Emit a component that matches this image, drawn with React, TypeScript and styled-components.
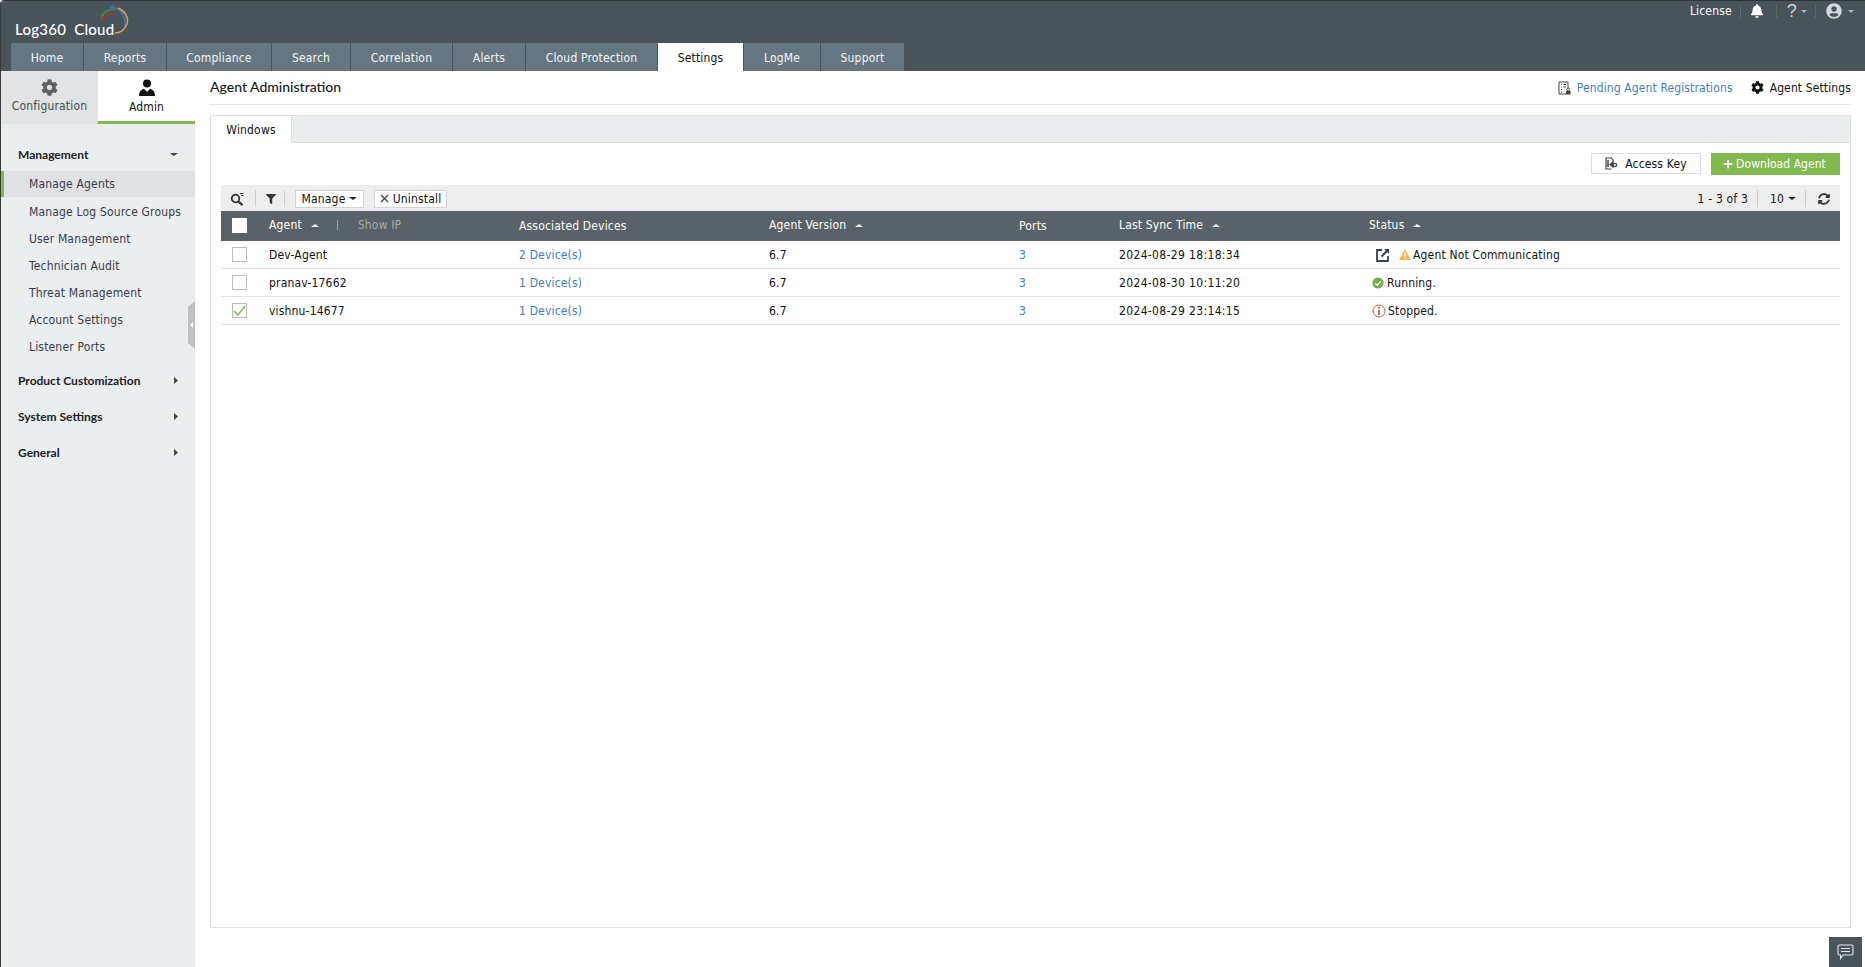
import React from "react";
import styled, { createGlobalStyle } from "styled-components";
import { FaBell, FaCog, FaFilter, FaPlus, FaSyncAlt, FaUserCircle } from "react-icons/fa";

const BODY = `"DejaVu Sans Condensed", "DejaVu Sans", sans-serif`;
const HEAD = `Lato, "Open Sans", sans-serif`;

const Global = createGlobalStyle`
  html, body { margin: 0; padding: 0; height: 100%; background: #fff; overflow: hidden; }
  * { box-sizing: border-box; }
  body { font-family: ${BODY}; font-size: 12px; color: #111; font-stretch: condensed; letter-spacing: .17px; }
`;

const Shell = styled.div`
  width: 1865px; height: 967px; display: flex; flex-direction: column;
  border-top: 1px solid #333; border-left: 1px solid #3a3a3a; border-top-left-radius: 4px; overflow: hidden;
`;
const Header = styled.header`
  height: 70px; flex: none; display: flex; flex-direction: column; background: #49535a;
`;
const TopBar = styled.div`
  height: 42px; flex: none; display: flex; justify-content: space-between; align-items: flex-start; padding: 0 11px 0 14px;
`;
const Logo = styled.div`
  position: relative; width: 120px; height: 42px; color: #fff; font-family: ${HEAD}; font-size: 15px; font-weight: 500;
  word-spacing: 4px; letter-spacing: .25px; padding-top: 18px; line-height: 20px; white-space: nowrap;
`;
const LogoArc = styled.svg`
  position: absolute; left: 84px; top: 5px;
`;
const Utils = styled.div`
  display: flex; align-items: center; height: 20px; color: #fff;
`;
const UtilLink = styled.span`
  font-size: 12px; color: #fff; padding-right: 8px; margin-right: 9px; line-height: 13px; border-right: 1px solid #5d686f;
`;
const UtilIcon = styled.span<{ $pad?: number }>`
  display: flex; align-items: center; gap: 4px; height: 13px; padding-right: ${p => p.$pad ?? 9}px; margin-right: 10px; border-right: 1px solid #5d686f; color: #d9dcde;
  &:last-child { border: 0; margin: 0; padding: 0; gap: 6px; }
`;
const Question = styled.span`
  font-size: 18px; line-height: 13px; color: #d0d4d6; font-family: "Liberation Sans", sans-serif;
`;
const Caret = styled.i<{ $c?: string; $up?: boolean; $s?: number }>`
  display: inline-block; width: 0; height: 0;
  border-left: ${p => p.$s ?? 4}px solid transparent; border-right: ${p => p.$s ?? 4}px solid transparent;
  ${p => (p.$up ? "border-bottom" : "border-top")}: ${p => (p.$s ?? 4) - 0.5}px solid ${p => p.$c ?? "#222"};
`;
const Tabs = styled.nav`
  display: flex; height: 28px; padding-left: 10px; gap: 1px;
`;
const Tab = styled.div<{ $w: number; $active?: boolean }>`
  width: ${p => p.$w}px; display: flex; align-items: center; justify-content: center; font-size: 12px; padding-top: 2px;
  background: ${p => (p.$active ? "#fff" : "#667680")}; color: ${p => (p.$active ? "#111" : "#f4f6f7")};
`;
const Body = styled.div`
  flex: 1; display: flex; min-height: 0;
`;
const Side = styled.aside`
  width: 194px; flex: none; background: #ebeeef; position: relative;
`;
const SideTabs = styled.div`
  display: flex; height: 53px; background: #fff; margin-bottom: 12px;
`;
const SideTab = styled.div<{ $active?: boolean }>`
  flex: none; width: 97px; display: flex; flex-direction: column; align-items: center; padding-top: 8px;
  gap: 3px; font-size: 12px; height: 53px;
  background: ${p => (p.$active ? "#fff" : "#e1e3e5")}; color: ${p => (p.$active ? "#111" : "#444b50")};
  border-bottom: 3px solid ${p => (p.$active ? "#82b94e" : "#e1e3e5")};
`;
const Section = styled.div`
  height: 36px; display: flex; align-items: center; justify-content: space-between; padding: 0 17px 0 17px;
  font-family: ${HEAD}; font-size: 12px; font-weight: 700; color: #1c2026; letter-spacing: 0;
`;
const MenuList = styled.ul`
  list-style: none; margin: -1px 0 2px; padding: 0;
`;
const MenuItem = styled.li<{ $active?: boolean }>`
  height: 27px; display: flex; align-items: center; padding-left: ${p => (p.$active ? 25 : 28)}px; font-size: 12px; color: #3a3a4e;
  ${p => p.$active && "background: #e0e1e3; border-left: 3px solid #82b94e; height: 26px; margin-bottom: 1px;"}
`;
const Handle = styled.div`
  position: absolute; right: 0; top: 230px; width: 7px; height: 48px; background: #bcc2c4;
  clip-path: polygon(0 6px, 100% 0, 100% 100%, 0 calc(100% - 6px)); display: flex; align-items: center; justify-content: center;
`;
const Main = styled.main`
  flex: 1; min-width: 0; display: flex; flex-direction: column; padding: 0 14px 39px 15px; background: #fff; position: relative;
`;
const TitleBar = styled.div`
  height: 34px; flex: none; display: flex; align-items: center; justify-content: space-between; border-bottom: 1px solid #e2e3e4; margin-bottom: 10px; padding-bottom: 3px;
`;
const Title = styled.h1`
  margin: 0; font-family: ${HEAD}; font-size: 14px; font-weight: 500; color: #15191d; letter-spacing: 0;
`;
const TitleLinks = styled.div`
  display: flex; align-items: center; gap: 18px; font-size: 12px; padding-top: 3px;
`;
const LinkItem = styled.span<{ $blue?: boolean }>`
  display: flex; align-items: center; gap: 6px; color: ${p => (p.$blue ? "#3f80bb" : "#111")}; letter-spacing: .12px;
`;
const Panel = styled.section`
  flex: 1; border: 1px solid #dcdedf; display: flex; flex-direction: column; padding: 0 10px;
`;
const PanelTabs = styled.div`
  margin: 0 -10px; height: 27px; flex: none; background: #ebeeef; border-bottom: 1px solid #dcdedf; display: flex;
`;
const PanelTab = styled.div`
  width: 81px; height: 27px; background: #fff; border-right: 1px solid #dcdedf; display: flex; align-items: center; justify-content: center; font-size: 12px;
`;
const Actions = styled.div`
  display: flex; justify-content: flex-end; align-items: flex-start; gap: 10px; height: 22px; margin: 10px 0 10px;
`;
const KeyBtn = styled.div`
  width: 110px; height: 21px; border: 1px solid #dcdedf; display: flex; align-items: center; justify-content: center; gap: 7px; font-size: 12px;
`;
const GreenBtn = styled.div`
  width: 129px; height: 22px; background: #82b94e; color: #fff; display: flex; align-items: center; justify-content: center; gap: 3px; font-size: 12px; letter-spacing: .05px; padding-right: 2px;
`;
const Toolbar = styled.div`
  height: 26px; flex: none; background: #eee; display: flex; align-items: center; padding: 1px 10px 0 9px;
`;
const ToolIcon = styled.span<{ $pad: number }>`
  display: flex; align-items: center; padding-right: ${p => p.$pad}px; margin-right: 10px; height: 17px; border-right: 1px solid #ccc;
`;
const ToolBtn = styled.div<{ $w: number }>`
  width: ${p => p.$w}px; height: 18px; background: #fff; border: 1px solid #d2d4d5; display: flex; align-items: center; justify-content: center; gap: 4px; margin-right: 10px; font-size: 12px;
`;
const Pager = styled.div`
  margin-left: auto; display: flex; align-items: center; font-size: 12px; height: 17px;
`;
const PagerCell = styled.span`
  display: flex; align-items: center; gap: 4px; height: 17px; padding-right: 9px; margin-right: 12px; border-right: 1px solid #ccc;
  &:last-child { border: 0; padding: 0; margin: 0; }
`;
const Grid = `display: grid; grid-template-columns: 48px 250px 250px 250px 100px 250px 1fr; align-items: center;`;
const HeadRow = styled.div`
  ${Grid} height: 30px; flex: none; background: #586268; color: #fff; font-size: 12px;
`;
const HeadCell = styled.div<{ $lift?: boolean }>`
  display: flex; align-items: center; gap: 9px; ${p => p.$lift && "padding-bottom: 2px;"}
`;
const Muted = styled.span`
  color: #a4aaae; margin-left: 11px;
`;
const Sep = styled.span`
  width: 1px; height: 10px; background: #9aa1a5; margin-left: 9px;
`;
const CheckCell = styled.div<{ $lift?: boolean }>`
  padding-left: 11px; display: flex; ${p => p.$lift && "padding-bottom: 2px;"}
`;
const Box = styled.span<{ $white?: boolean }>`
  width: 15px; height: 15px; background: #fff; border: 1px solid ${p => (p.$white ? "#fff" : "#b9bdc0")}; display: flex; align-items: center; justify-content: center;
`;
const Row = styled.div`
  ${Grid} height: 28px; flex: none; border-bottom: 1px solid #e0e2e3; font-size: 12px; color: #111;
`;
const LinkText = styled.span`
  color: #3f80bb;
`;
const TimeText = styled.div`
  letter-spacing: .35px;
`;
const StatusCell = styled.div`
  display: flex; align-items: center; gap: 2px; padding-left: 3px;
`;
const RunningText = styled.span`
  margin-left: 1px;
`;
const ExternalWrap = styled.span`
  display: flex; margin-left: 4px; margin-right: 7px;
`;
const ChatBtn = styled.div`
  position: absolute; right: 3px; bottom: 0; width: 33px; height: 30px; background: #49535a; display: flex; align-items: center; justify-content: center;
`;
const LowerIcon = styled.span`
  display: flex;
`;

const tabs: [string, number, boolean?][] = [
  ["Home", 72], ["Reports", 82], ["Compliance", 104], ["Search", 78], ["Correlation", 101], ["Alerts", 72],
  ["Cloud Protection", 131], ["Settings", 85, true], ["LogMe", 76], ["Support", 83],
];
const menu = ["Manage Log Source Groups", "User Management", "Technician Audit", "Threat Management", "Account Settings", "Listener Ports"];

const AdminIcon = () => (
  <svg width="18" height="18" viewBox="0 0 18 18" fill="#111">
    <circle cx="9" cy="4.6" r="4" />
    <path d="M1 17c0-4 1.5-6.5 5-7.3L9 13l3-3.3c3.5.8 5 3.3 5 7.3z" />
  </svg>
);
const PendingIcon = () => (
  <svg width="13" height="14" viewBox="0 0 13 14" fill="none" stroke="#444" strokeWidth="1">
    <path d="M8 13H1V1h9v6" />
    <path d="M3 3.5h1M5.5 3.5h2.5M3 6h1M5.5 6h2.5M3 8.5h1M3 11h1" />
    <rect x="8" y="10" width="4.5" height="3.5" fill="#444" stroke="none" />
    <circle cx="10.2" cy="8.5" r="1.4" />
  </svg>
);
const SearchIcon = () => (
  <svg width="14" height="14" viewBox="0 0 14 14" fill="none" stroke="#333" strokeWidth="1.8">
    <circle cx="5.5" cy="6.5" r="3.8" />
    <path d="M8.5 9.5l4 3.6" strokeWidth="2.2" />
    <path d="M10 1.5h3.5M11 3.5h2.5" strokeWidth="1" />
  </svg>
);
const KeyIcon = () => (
  <svg width="13" height="13" viewBox="0 0 13 13" fill="none" stroke="#444" strokeWidth="1.2">
    <path d="M6.5 12H1V1h5.5l1.5 2v2" />
    <path d="M3 3v7" strokeWidth="1.5" />
    <path d="M5 7.5l3-2.5v5z" fill="#444" />
    <circle cx="10" cy="8" r="1.6" />
  </svg>
);
const ExternalIcon = () => (
  <svg width="14" height="14" viewBox="0 0 14 14" fill="none" stroke="#3a4247" strokeWidth="1.8">
    <path d="M6 2H1v11h11V8" />
    <path d="M5.5 8.5L11 3" strokeWidth="2" />
    <path d="M8 1h5v5z" fill="#3a4247" stroke="none" />
  </svg>
);
const WarnIcon = () => (
  <svg width="12" height="11" viewBox="0 0 12 11">
    <path d="M6 0l6 11H0z" fill="#f2b84f" />
    <path d="M5.4 3.5h1.2v4H5.4zM5.4 8.3h1.2v1.2H5.4z" fill="#fff" />
  </svg>
);
const OkIcon = () => (
  <svg width="12" height="12" viewBox="0 0 12 12">
    <circle cx="6" cy="6" r="5.6" fill="#72ad4b" />
    <path d="M3.2 6.2l2 2 3.6-3.8" fill="none" stroke="#fff" strokeWidth="1.4" />
  </svg>
);
const StopIcon = () => (
  <svg width="14" height="14" viewBox="0 0 14 14" fill="none">
    <circle cx="7" cy="7" r="6" stroke="#c0623f" strokeWidth="1" />
    <path d="M7 6v5" stroke="#a8512f" strokeWidth="1.6" />
    <circle cx="7" cy="3.8" r="1" fill="#a8512f" />
  </svg>
);
const ChatIcon = () => (
  <svg width="17" height="16" viewBox="0 0 17 16" fill="none" stroke="#e6e9ea" strokeWidth="1.1">
    <path d="M2.5 1h12A1.5 1.5 0 0 1 16 2.5v7a1.5 1.5 0 0 1-1.5 1.5H6l-2.5 3.5V11h-1A1.5 1.5 0 0 1 1 9.5v-7A1.5 1.5 0 0 1 2.5 1z" />
    <path d="M4 4.5h9M4 7.5h9" />
  </svg>
);
const CrossIcon = () => (
  <svg width="9" height="9" viewBox="0 0 9 9" fill="none" stroke="#444" strokeWidth="1.3">
    <path d="M1 1l7 7M8 1L1 8" />
  </svg>
);

const SortHead = ({ label }: { label: string }) => (
  <HeadCell $lift>{label}<Caret $c="#fff" $up /></HeadCell>
);

function RightCaret() {
  return <svg width="4" height="7" viewBox="0 0 4 7"><path d="M0 0l4 3.5L0 7z" fill="#444" /></svg>;
}

const rows = [
  { name: "Dev-Agent", dev: "2 Device(s)", time: "2024-08-29 18:18:34", status: "bad" },
  { name: "pranav-17662", dev: "1 Device(s)", time: "2024-08-30 10:11:20", status: "ok" },
  { name: "vishnu-14677", dev: "1 Device(s)", time: "2024-08-29 23:14:15", status: "stop", checked: true },
];

export default function App() {
  return (
    <>
      <Global />
      <Shell>
        <Header>
          <TopBar>
            <Logo>
              Log360 Cloud
              <LogoArc width="30" height="30" viewBox="0 0 30 30" fill="none">
                <path d="M2 11C5 6 10 3 16 3" stroke="#3d8a55" strokeWidth="2.2" />
                <path d="M2 15C5 10 10 7 17 7" stroke="#a23a2c" strokeWidth="2.2" />
                <path d="M11 1C20 1 28 10 26 21" stroke="#3a6fb5" strokeWidth="2.2" />
                <path d="M19 2C26 5 30 11 28 18C26 23 22 27 16 27" stroke="#e0a43c" strokeWidth="1.5" />
              </LogoArc>
            </Logo>
            <Utils>
              <UtilLink>License</UtilLink>
              <UtilIcon $pad={12}><FaBell size={14} color="#fff" /></UtilIcon>
              <UtilIcon $pad={8}><Question>?</Question><Caret $c="#b0b6ba" $s={3.5} /></UtilIcon>
              <UtilIcon><FaUserCircle size={16} color="#d5d8da" /><Caret $c="#b0b6ba" $s={3.5} /></UtilIcon>
            </Utils>
          </TopBar>
          <Tabs>
            {tabs.map(([t, w, a]) => <Tab key={t} $w={w} $active={a}>{t}</Tab>)}
          </Tabs>
        </Header>
        <Body>
          <Side>
            <SideTabs>
              <SideTab><FaCog size={17} color="#5b6368" />Configuration</SideTab>
              <SideTab $active><AdminIcon />Admin</SideTab>
            </SideTabs>
            <Section>Management<Caret $c="#444" /></Section>
            <MenuList>
              <MenuItem $active>Manage Agents</MenuItem>
              {menu.map(m => <MenuItem key={m}>{m}</MenuItem>)}
            </MenuList>
            <Section>Product Customization<LowerIcon><RightCaret /></LowerIcon></Section>
            <Section>System Settings<LowerIcon><RightCaret /></LowerIcon></Section>
            <Section>General<LowerIcon><RightCaret /></LowerIcon></Section>
            <Handle><svg width="3" height="6" viewBox="0 0 3 6"><path d="M3 0v6L0 3z" fill="#fff" /></svg></Handle>
          </Side>
          <Main>
            <TitleBar>
              <Title>Agent Administration</Title>
              <TitleLinks>
                <LinkItem $blue><PendingIcon />Pending Agent Registrations</LinkItem>
                <LinkItem><FaCog size={13} color="#111" />Agent Settings</LinkItem>
              </TitleLinks>
            </TitleBar>
            <Panel>
              <PanelTabs><PanelTab>Windows</PanelTab></PanelTabs>
              <Actions>
                <KeyBtn><KeyIcon />Access Key</KeyBtn>
                <GreenBtn><FaPlus size={10} />Download Agent</GreenBtn>
              </Actions>
              <Toolbar>
                <ToolIcon $pad={11}><SearchIcon /></ToolIcon>
                <ToolIcon $pad={8}><FaFilter size={10} color="#333" /></ToolIcon>
                <ToolBtn $w={69}>Manage<Caret $c="#222" /></ToolBtn>
                <ToolBtn $w={73}><CrossIcon />Uninstall</ToolBtn>
                <Pager>
                  <PagerCell>1 - 3 of 3</PagerCell>
                  <PagerCell>10<Caret $c="#222" /></PagerCell>
                  <PagerCell><FaSyncAlt size={12} color="#333" /></PagerCell>
                </Pager>
              </Toolbar>
              <HeadRow>
                <CheckCell $lift><Box $white /></CheckCell>
                <HeadCell $lift>Agent<Caret $c="#fff" $up /><Sep /><Muted>Show IP</Muted></HeadCell>
                <HeadCell>Associated Devices</HeadCell>
                <SortHead label="Agent Version" />
                <HeadCell>Ports</HeadCell>
                <SortHead label="Last Sync Time" />
                <SortHead label="Status" />
              </HeadRow>
              {rows.map(r => (
                <Row key={r.name}>
                  <CheckCell>
                    <Box>
                      {r.checked && (
                        <svg width="13" height="11" viewBox="0 0 13 11" fill="none" stroke="#82b94e" strokeWidth="1.5">
                          <path d="M1 6l4 4 7-9" />
                        </svg>
                      )}
                    </Box>
                  </CheckCell>
                  <div>{r.name}</div>
                  <LinkText>{r.dev}</LinkText>
                  <div>6.7</div>
                  <LinkText>3</LinkText>
                  <TimeText>{r.time}</TimeText>
                  <StatusCell>
                    {r.status === "bad" && <><ExternalWrap><ExternalIcon /></ExternalWrap><WarnIcon />Agent Not Communicating</>}
                    {r.status === "ok" && <><OkIcon /><RunningText>Running.</RunningText></>}
                    {r.status === "stop" && <><StopIcon />Stopped.</>}
                  </StatusCell>
                </Row>
              ))}
            </Panel>
            <ChatBtn><ChatIcon /></ChatBtn>
          </Main>
        </Body>
      </Shell>
    </>
  );
}
